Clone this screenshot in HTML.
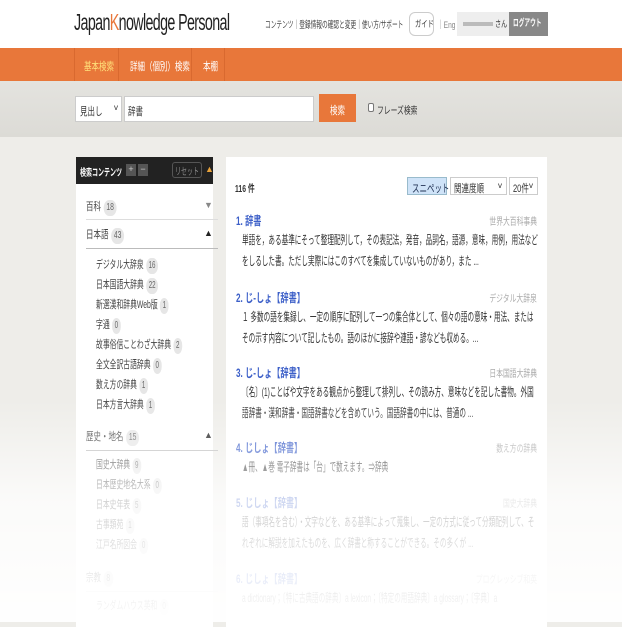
<!DOCTYPE html>
<html><head><meta charset="utf-8"><style>
*{margin:0;padding:0;box-sizing:border-box}
body{width:622px;height:622px;overflow:hidden;background:#eeede9;font-family:"Liberation Sans","Noto Sans CJK JP",sans-serif;font-size:10px;color:#333;position:relative}
.n{transform:scaleX(.68);transform-origin:left top;white-space:nowrap}
.hdr{position:absolute;left:0;top:0;width:622px;height:48px;background:#fff}
.logo{position:absolute;left:74px;top:9px;font-size:23px;letter-spacing:-1px;color:#222;transform:scaleX(.62);transform-origin:left;white-space:nowrap}
.logo b{color:#e8773a;font-weight:normal}
.tl{position:absolute;top:17px;font-size:9.5px;color:#444}
.guide{position:absolute;left:409px;top:12px;width:25px;height:24px;border:1px solid #ccc;border-radius:6px;font-size:9px;line-height:22px;overflow:hidden}
.user{position:absolute;left:457px;top:12px;width:52px;height:24px;background:#eee;font-size:9px;line-height:24px}
.user i{position:absolute;left:6px;top:10px;width:30px;height:4px;background:#bbb}
.logout{position:absolute;left:509px;top:12px;width:39px;height:24px;background:#888;color:#fff;font-size:9.5px;font-weight:bold;line-height:24px;overflow:hidden}
.nav{position:absolute;left:0;top:48px;width:622px;height:33px;background:#e8773a}
.nav div.s{position:absolute;top:0;height:33px;border-right:1px solid #d9692f}
.nav .n{position:absolute;top:10px;font-size:11px;color:#fff}
.sb{position:absolute;left:0;top:81px;width:622px;height:56px;background:linear-gradient(#e4e3df,#dcdbd6)}
.sel{position:absolute;left:75px;top:96px;width:47px;height:26px;background:#fff;border:1px solid #ccc}
.inp{position:absolute;left:124px;top:96px;width:190px;height:26px;background:#fff;border:1px solid #ccc}
.btn{position:absolute;left:319px;top:94px;width:37px;height:28px;background:#e8773a}
.side{position:absolute;left:76px;top:157px;width:137px;height:470px;background:#fff}
.sh{height:27px;background:#222;position:relative}
.sh .b{position:absolute;top:7px;width:10px;height:12px;background:#555;color:#ccc;font-size:9px;line-height:11px;text-align:center}
.cat{position:absolute;left:10px;font-size:11px;color:#444}
.cnt{display:inline-block;background:#e6e6e6;border-radius:8px;font-size:10px;padding:0 4px;line-height:16px;color:#666;margin-left:4px}
.sub{position:absolute;left:20px;font-size:11px;color:#444;transform:scaleX(.62)}
.line{position:absolute;left:10px;width:132px;height:1px;background:#ddd}
.main{position:absolute;left:226px;top:157px;width:321px;height:470px;background:#fff}
.r{position:absolute;left:10px;width:301px}
.t{position:absolute;left:0;top:0;color:#3c5fc8;font-size:12px;font-weight:bold}
.src{position:absolute;right:0;top:1px;color:#aaa;font-size:10px;transform-origin:right top}
.d{position:absolute;left:6px;top:18px;font-size:12px;line-height:21px;color:#333;width:540px;white-space:normal}
.fade{position:absolute;left:0;top:400px;width:622px;height:222px;background:linear-gradient(rgba(255,255,255,0),rgba(255,255,255,.75) 45%,rgba(255,255,255,.97))}
</style></head><body>
<div class="hdr">
<div class="logo">Japan<b>K</b>nowledge Personal</div>
<div class="tl n" style="left:265px;transform:scaleX(.6)">コンテンツ｜登録情報の確認と変更｜使い方/サポート</div>
<div class="guide"><div class="n" style="position:absolute;left:5px;top:0;transform:scaleX(.7)">ガイド</div></div>
<div class="tl n" style="left:437px;color:#888;transform:scaleX(.7)">｜Eng</div>
<div class="user"><i></i><div class="n" style="position:absolute;left:38px;top:0">さん</div></div>
<div class="logout"><div class="n" style="position:absolute;left:4px;top:0;transform:scaleX(.6)">ログアウト</div></div>
</div>
<div class="nav">
<div class="s" style="left:74px;width:45px;border-left:1px solid #d9692f"></div><div class="s" style="left:119px;width:73px"></div><div class="s" style="left:192px;width:33px"></div>
<div class="n" style="left:84px;color:#ffe07a">基本検索</div><div class="n" style="left:130px">詳細（個別）検索</div><div class="n" style="left:203px">本棚</div></div>
<div class="sb"></div>
<div class="sel"><div class="n" style="position:absolute;left:4px;top:6px;font-size:11px">見出し</div><span style="position:absolute;left:38px;top:6px;font-size:8px">v</span></div>
<div class="inp"><div class="n" style="position:absolute;left:3px;top:6px;font-size:11px">辞書</div></div>
<div class="btn"><div class="n" style="position:absolute;left:11px;top:8px;color:#fff;font-size:11px">検索</div></div>
<div style="position:absolute;left:368px;top:103px;width:6px;height:9px;border:1px solid #777;border-radius:2px;background:#fff"></div>
<div class="n" style="position:absolute;left:377px;top:102px;font-size:10px">フレーズ検索</div>

<div class="side">
<div class="sh"><div class="n" style="position:absolute;left:4px;top:7px;color:#fff;font-size:10px;font-weight:bold;transform:scaleX(.6)">検索コンテンツ</div><span class="b" style="left:50px">+</span><span class="b" style="left:62px">−</span><span style="position:absolute;left:96px;top:5px;width:30px;height:16px;border:1px solid #555;border-radius:3px"></span><div class="n" style="position:absolute;left:99px;top:6px;color:#888;font-size:10px;transform:scaleX(.6)">リセット</div><span style="position:absolute;left:129px;top:7px;color:#e8a23a;font-size:9px">▲</span></div>
<div class="cat n" style="top:41px">百科<span class="cnt">18</span></div><span style="position:absolute;left:128px;top:43px;color:#888;font-size:9px">▼</span>
<div class="line" style="top:62px"></div>
<div class="cat n" style="top:69px">日本語<span class="cnt">43</span></div><span style="position:absolute;left:128px;top:71px;color:#222;font-size:9px">▲</span>
<div class="line" style="top:91px;background:#bbb"></div>
<div class="sub n" style="top:99px">デジタル大辞泉<span class="cnt">16</span></div>
<div class="sub n" style="top:119px">日本国語大辞典<span class="cnt">22</span></div>
<div class="sub n" style="top:139px">新選漢和辞典Web版<span class="cnt">1</span></div>
<div class="sub n" style="top:159px">字通<span class="cnt">0</span></div>
<div class="sub n" style="top:179px">故事俗信ことわざ大辞典<span class="cnt">2</span></div>
<div class="sub n" style="top:199px">全文全訳古語辞典<span class="cnt">0</span></div>
<div class="sub n" style="top:219px">数え方の辞典<span class="cnt">1</span></div>
<div class="sub n" style="top:239px">日本方言大辞典<span class="cnt">1</span></div>
<div class="cat n" style="top:271px">歴史・地名<span class="cnt">15</span></div><span style="position:absolute;left:128px;top:273px;color:#222;font-size:9px">▲</span>
<div class="line" style="top:293px;background:#bbb"></div>
<div class="sub n" style="top:299px">国史大辞典<span class="cnt">9</span></div>
<div class="sub n" style="top:319px">日本歴史地名大系<span class="cnt">0</span></div>
<div class="sub n" style="top:339px">日本史年表<span class="cnt">5</span></div>
<div class="sub n" style="top:359px">古事類苑<span class="cnt">1</span></div>
<div class="sub n" style="top:379px">江戸名所図会<span class="cnt">0</span></div>
<div class="cat n" style="top:412px">宗教<span class="cnt">8</span></div>
<div class="line" style="top:434px"></div>
<div class="sub n" style="top:440px">ランダムハウス英和<span class="cnt">0</span></div>
</div>

<div class="main">
<div class="n" style="position:absolute;left:9px;top:23px;font-size:10px;font-weight:bold">116 件</div>
<div style="position:absolute;left:181px;top:20px;width:40px;height:18px;background:#cfe3f8;border:1px solid #9bc"><div class="n" style="position:absolute;left:4px;top:2px;font-size:11px;color:#235">スニペット</div></div>
<div style="position:absolute;left:224px;top:20px;width:57px;height:18px;border:1px solid #ccc"><div class="n" style="position:absolute;left:3px;top:2px;font-size:11px">関連度順</div><span style="position:absolute;right:4px;top:3px;font-size:8px">v</span></div>
<div style="position:absolute;left:283px;top:20px;width:29px;height:18px;border:1px solid #ccc"><div class="n" style="position:absolute;left:3px;top:2px;font-size:11px">20件</div><span style="position:absolute;right:4px;top:3px;font-size:8px">v</span></div>

<div class="r" style="top:55px"><span class="t n">1. 辞書</span><span class="src n" style="right:0">世界大百科事典</span><div class="d n" style="transform:scaleX(.55)">単語を，ある基準にそって整理配列して，その表記法，発音，品詞名，語源，意味，用例，用法などをしるした書。ただし実際にはこのすべてを集成していないものがあり，また ...</div></div>
<div class="r" style="top:132px"><span class="t n">2. じ-しょ【辞書】</span><span class="src n">デジタル大辞泉</span><div class="d n" style="transform:scaleX(.55)">１ 多数の語を集録し、一定の順序に配列して一つの集合体として、個々の語の意味・用法、またはその示す内容について記したもの。語のほかに接辞や連語・諺なども収める。...</div></div>
<div class="r" style="top:207px"><span class="t n">3. じ-しょ【辞書】</span><span class="src n">日本国語大辞典</span><div class="d n" style="transform:scaleX(.55)">〔名〕(1)ことばや文字をある観点から整理して排列し、その読み方、意味などを記した書物。外国語辞書・漢和辞書・国語辞書などを含めていう。国語辞書の中には、普通の ...</div></div>
<div class="r" style="top:282px"><span class="t n">4. じしょ【辞書】</span><span class="src n">数え方の辞典</span><div class="d n" style="transform:scaleX(.55)">▲冊、▲巻 電子辞書は「台」で数えます。⇒辞典</div></div>
<div class="r" style="top:337px"><span class="t n">5. じしょ【辞書】</span><span class="src n">国史大辞典</span><div class="d n" style="transform:scaleX(.55)">語（事項名を含む）・文字などを、ある基準によって蒐集し、一定の方式に従って分類配列して、それぞれに解説を加えたものを、広く辞書と称することができる。その多くが ...</div></div>
<div class="r" style="top:413px"><span class="t n">6. じしょ【辞書】</span><span class="src n">プログレッシブ和英</span><div class="d n" style="transform:scaleX(.55)">a dictionary；〔特に古典語の辞典〕a lexicon；〔特定の用語辞典〕a glossary；〔字典〕a</div></div>
</div>
<div class="fade"></div>
</body></html>
